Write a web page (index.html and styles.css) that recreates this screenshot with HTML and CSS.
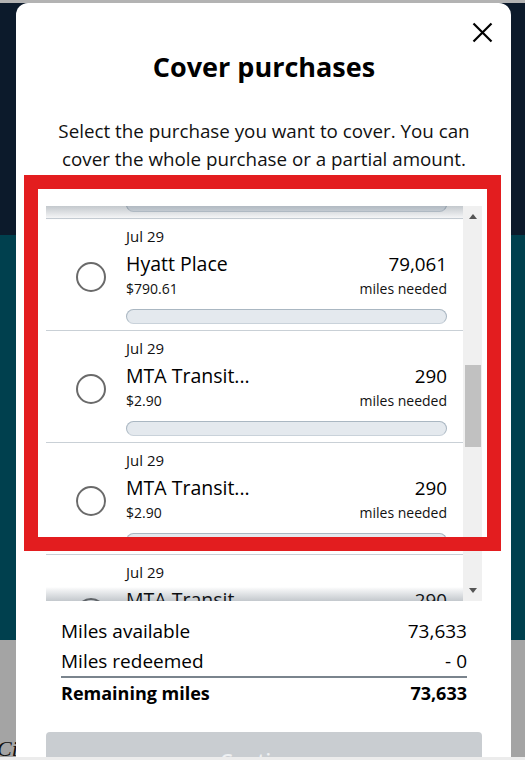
FILE: index.html
```html
<!DOCTYPE html>
<html lang="en">
<head>
<meta charset="utf-8">
<title>Cover purchases</title>
<link rel="stylesheet" href="styles.css">
</head>
<body>
<div class="page">
  <div class="band band-top"></div>
  <div class="band band-navy"></div>
  <div class="band band-teal"></div>
  <div class="band band-gray"><span class="bg-text">Ci</span></div>
</div>

<div class="modal">
  <button class="close" aria-label="Close">
    <svg width="21" height="21" viewBox="0 0 21 21"><path d="M1.5 1.5 L19.5 19.5 M19.5 1.5 L1.5 19.5" stroke="#000" stroke-width="2.2" fill="none"/></svg>
  </button>
  <h1 class="title">Cover purchases</h1>
  <p class="desc">Select the purchase you want to cover. You can cover the whole purchase or a partial amount.</p>

  <div class="list-box">
    <div class="viewport">
      <div class="list">
        <div class="item">
          <span class="radio"></span>
          <div class="info">
            <div class="date">Jul 29</div>
            <div class="row name-row"><span class="name">Hyatt Place</span><span class="miles">79,061</span></div>
            <div class="row sub-row"><span>$790.61</span><span>miles needed</span></div>
            <div class="bar"></div>
          </div>
        </div>
        <div class="item">
          <span class="radio"></span>
          <div class="info">
            <div class="date">Jul 29</div>
            <div class="row name-row"><span class="name">Hyatt Place</span><span class="miles">79,061</span></div>
            <div class="row sub-row"><span>$790.61</span><span>miles needed</span></div>
            <div class="bar"></div>
          </div>
        </div>
        <div class="item">
          <span class="radio"></span>
          <div class="info">
            <div class="date">Jul 29</div>
            <div class="row name-row"><span class="name">MTA Transit...</span><span class="miles">290</span></div>
            <div class="row sub-row"><span>$2.90</span><span>miles needed</span></div>
            <div class="bar"></div>
          </div>
        </div>
        <div class="item">
          <span class="radio"></span>
          <div class="info">
            <div class="date">Jul 29</div>
            <div class="row name-row"><span class="name">MTA Transit...</span><span class="miles">290</span></div>
            <div class="row sub-row"><span>$2.90</span><span>miles needed</span></div>
            <div class="bar"></div>
          </div>
        </div>
        <div class="item">
          <span class="radio"></span>
          <div class="info">
            <div class="date">Jul 29</div>
            <div class="row name-row"><span class="name">MTA Transit...</span><span class="miles">290</span></div>
            <div class="row sub-row"><span>$2.90</span><span>miles needed</span></div>
            <div class="bar"></div>
          </div>
        </div>
      </div>
    </div>
    <div class="scrollbar">
      <span class="arrow arrow-up"></span>
      <div class="track"><div class="thumb"></div></div>
      <span class="arrow arrow-down"></span>
    </div>
  </div>

  <div class="summary">
    <div class="sum-row"><span>Miles available</span><span>73,633</span></div>
    <div class="sum-row sum-redeemed"><span>Miles redeemed</span><span>- 0</span></div>
    <div class="sum-row sum-total"><span>Remaining miles</span><span>73,633</span></div>
  </div>

  <button class="continue">Continue</button>
</div>

<div class="highlight"></div>
<div class="bottom-bar"></div>
</body>
</html>
```

FILE: styles.css
```css
* { box-sizing: border-box; }

body {
  margin: 0;
  width: 525px;
  height: 760px;
  overflow: hidden;
  position: relative;
  font-family: "Open Sans", "Noto Sans", sans-serif;
  color: #111;
}

.page {
  display: flex;
  flex-direction: column;
  height: 760px;
}
.band-top { height: 3px; background: #b3b3b3; }
.band-navy { height: 232px; background: #0c1a2b; }
.band-teal { height: 405px; background: #00404e; }
.band-gray {
  flex: 1;
  background: #a4a4a4;
  display: flex;
  align-items: flex-end;
}
.bg-text {
  font-family: "Liberation Serif", serif;
  font-style: italic;
  font-size: 22px;
  line-height: 22px;
  margin-left: -3px;
  color: #111;
}

.modal {
  position: absolute;
  top: 3px;
  left: 16px;
  width: 495px;
  height: 800px;
  background: #fff;
  border-radius: 12px;
  padding: 46px 29px 0 30px;
}

.close {
  position: absolute;
  top: 19px;
  right: 18px;
  width: 21px;
  height: 21px;
  padding: 0;
  border: 0;
  background: none;
  display: block;
}
.close svg { display: block; }

.title {
  margin: 0;
  text-align: center;
  font-size: 27px;
  line-height: 36px;
  font-weight: 700;
  color: #000;
}

.desc {
  margin: 32px 0 0;
  text-align: center;
  font-size: 18.8px;
  line-height: 28px;
  color: #111;
}

.list-box {
  margin-top: 33px;
  display: flex;
  height: 395px;
}

.viewport {
  position: relative;
  flex: 1;
  overflow: hidden;
}
.viewport::before,
.viewport::after {
  content: "";
  position: absolute;
  left: 0;
  right: 0;
  height: 14px;
  z-index: 2;
  pointer-events: none;
}
.viewport::before {
  top: 0;
  background: linear-gradient(to bottom, rgba(70, 85, 100, 0.32), rgba(70, 85, 100, 0.06) 85%, rgba(70, 85, 100, 0));
}
.viewport::after {
  bottom: 0;
  background: linear-gradient(to top, rgba(70, 85, 100, 0.32), rgba(70, 85, 100, 0.06) 85%, rgba(70, 85, 100, 0));
}

.list { margin-top: -99px; }

.item {
  display: grid;
  grid-template-columns: 30px 1fr;
  column-gap: 20px;
  height: 112px;
  padding: 7px 16px 6px 30px;
  border-bottom: 1px solid #c9d0d6;
}

.radio {
  align-self: center;
  margin-top: 3px;
  width: 30px;
  height: 30px;
  border: 2px solid #6a6a6a;
  border-radius: 50%;
}

.info {
  display: flex;
  flex-direction: column;
}

.date {
  font-size: 15px;
  line-height: 20px;
}

.row {
  display: flex;
  justify-content: space-between;
}
.name-row {
  margin-top: 6px;
  font-size: 19.5px;
  line-height: 24px;
  color: #000;
}
.miles { font-size: 18.8px; }
.sub-row {
  margin-top: 3px;
  font-size: 14px;
  line-height: 20px;
}

.bar {
  margin-top: 10px;
  height: 15px;
  border-radius: 8px;
  background: #e4e9ee;
  border: 1px solid #aab7c2;
  border-bottom-color: #c9d2da;
}

.scrollbar {
  width: 19px;
  background: #f0f0f0;
  display: flex;
  flex-direction: column;
  align-items: center;
}
.arrow {
  width: 0;
  height: 0;
  border-left: 4px solid transparent;
  border-right: 4px solid transparent;
  margin: 8px 0;
}
.arrow-up { border-bottom: 5px solid #555; }
.arrow-down { border-top: 5px solid #555; }
.track {
  flex: 1;
  width: 100%;
  padding: 138px 1px 0 2px;
}
.thumb {
  height: 82px;
  background: #c1c1c1;
}

.summary {
  margin-top: 15px;
  padding: 0 15px;
}
.sum-row {
  display: flex;
  justify-content: space-between;
  font-size: 19px;
  line-height: 30px;
  color: #000;
}
.sum-redeemed { border-bottom: 2px solid #7a848d; }
.sum-total { font-weight: 700; font-size: 18px; }

.continue {
  display: block;
  width: 100%;
  margin-top: 24px;
  height: 48px;
  padding: 8px 0 0;
  border: 0;
  border-radius: 4px;
  background: #c9cdd1;
  color: #eef0f2;
  font-family: inherit;
  font-size: 20px;
  font-weight: 600;
}

.highlight {
  position: absolute;
  left: 24px;
  top: 175px;
  width: 477px;
  height: 376px;
  border: 14px solid #e31d1f;
  pointer-events: none;
}

.bottom-bar {
  position: absolute;
  left: 0;
  right: 0;
  bottom: 0;
  height: 3px;
  background: #ececec;
}
```
